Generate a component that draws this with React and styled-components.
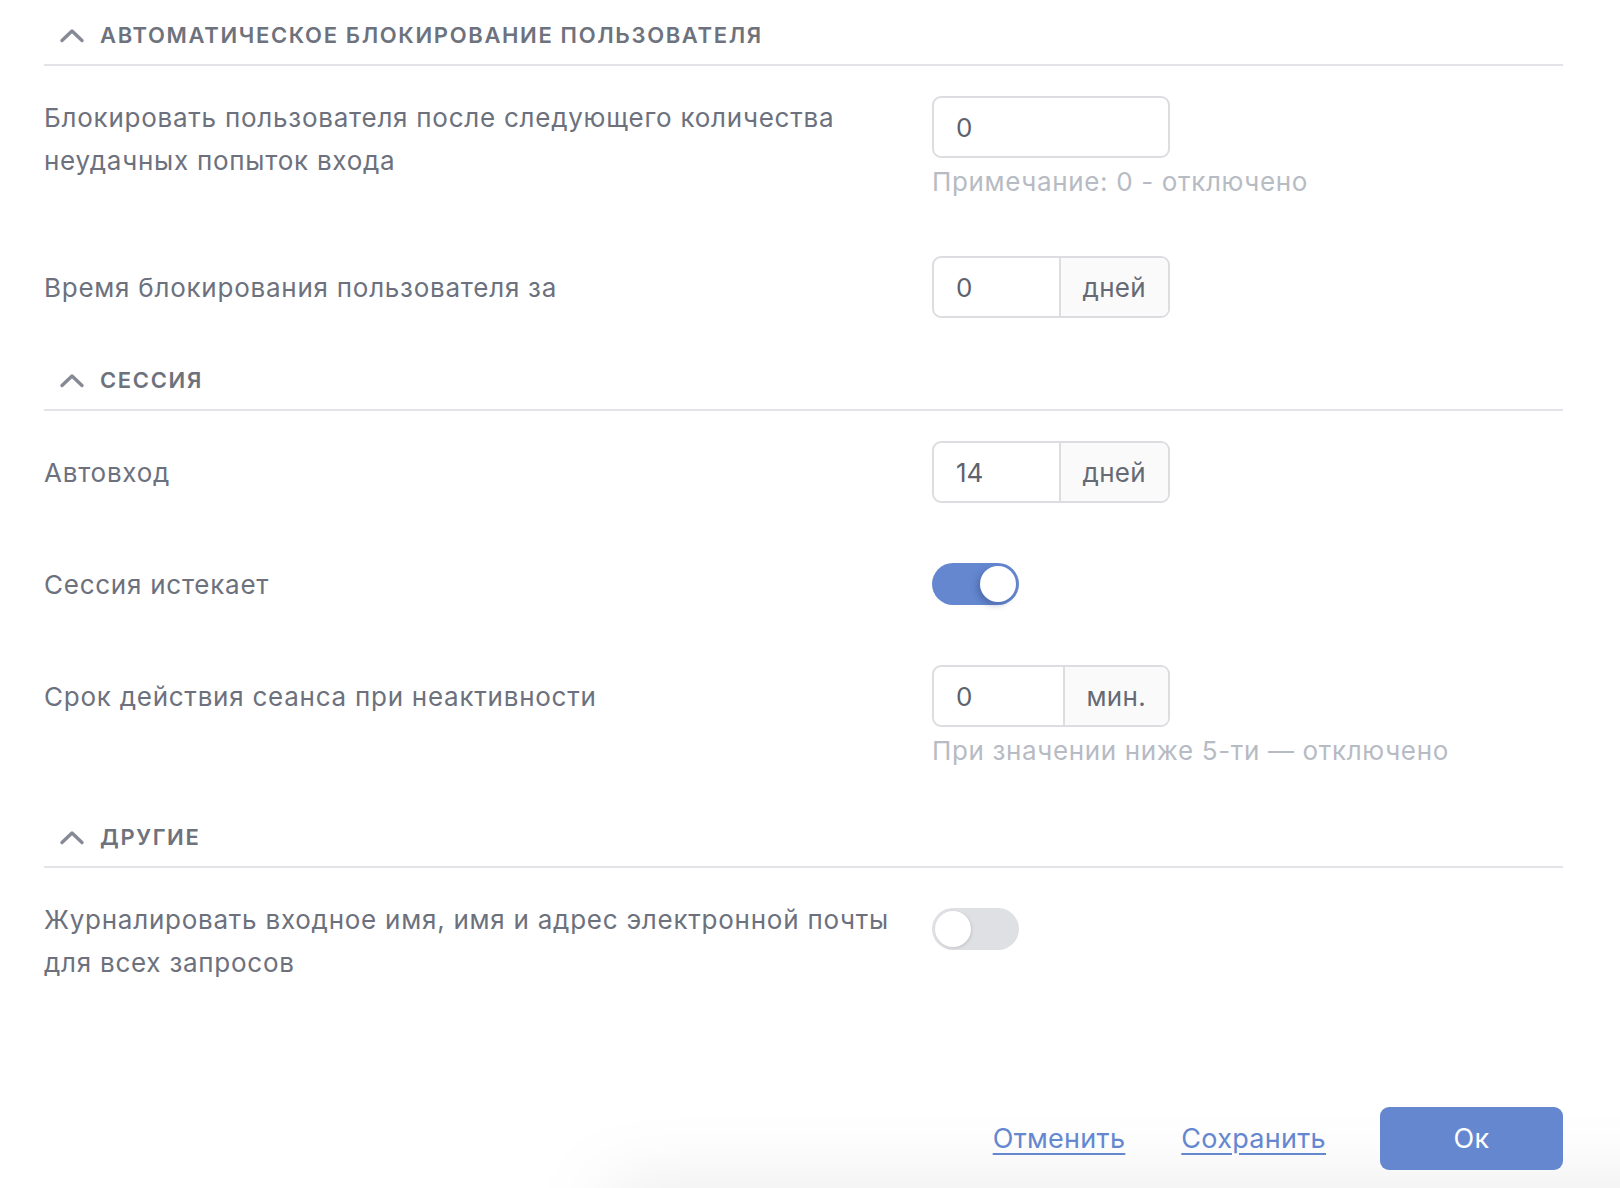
import React from "react";
import styled, { createGlobalStyle } from "styled-components";

const Global = createGlobalStyle`
  html, body { margin: 0; padding: 0; background: #ffffff; }
  body { font-family: Inter, "Noto Sans", "Liberation Sans", sans-serif; -webkit-font-smoothing: antialiased; }
  * { box-sizing: border-box; }
`;

const Page = styled.div`
  position: relative;
  height: 100vh;
  overflow: hidden;
  display: flex;
  flex-direction: column;
  padding: 0 57px 18px 44px;
  color: #6c717d;
`;

const Section = styled.section`
  padding-bottom: 27px;
`;

const Header = styled.div`
  display: flex;
  align-items: center;
  gap: 15px;
  padding: 19px 0 13px 15px;
  border-bottom: 2px solid #e3e4e8;
  line-height: 32px;
`;

const HeaderTitle = styled.span`
  font-size: 22px;
  font-weight: 600;
  letter-spacing: 1.65px;
  text-transform: uppercase;
  color: #6d727d;
`;

const Body = styled.div`
  display: flex;
  flex-direction: column;
  gap: 50px;
  padding-top: 30px;
`;

const Row = styled.div`
  display: grid;
  grid-template-columns: 888px 1fr;
  align-items: start;
`;

const Label = styled.div`
  min-height: 62px;
  display: flex;
  align-items: center;
  padding-right: 14px;
  font-size: 26px;
  line-height: 43px;
  letter-spacing: 0.75px;
  color: #6c717d;
`;

const Control = styled.div`
  display: flex;
  flex-direction: column;
  align-items: flex-start;
`;

const ControlLine = styled.div`
  height: 62px;
  display: flex;
  align-items: center;
`;

const InputBox = styled.div`
  width: 238px;
  height: 62px;
  display: flex;
  border: 2px solid #dcdde0;
  border-radius: 9px;
  overflow: hidden;
  background: #ffffff;
`;

const Value = styled.div`
  flex: 1;
  display: flex;
  align-items: center;
  padding-left: 22px;
  font-size: 26px;
  color: #5d626d;
`;

const Addon = styled.div`
  display: flex;
  align-items: center;
  padding: 0 22px;
  border-left: 2px solid #dcdde0;
  background: #fafafa;
  font-size: 26px;
  letter-spacing: 0.3px;
  color: #656a75;
`;

const Hint = styled.div`
  margin: 1px 0 2px;
  font-size: 26px;
  line-height: 45px;
  letter-spacing: 0.65px;
  color: #b7bbc3;
`;

const Track = styled.div`
  position: relative;
  width: 87px;
  height: 42px;
  border-radius: 21px;
  background: ${(p) => (p.$on ? "#6487d0" : "#dfe0e3")};
`;

const Knob = styled.div`
  position: absolute;
  top: 3px;
  left: ${(p) => (p.$on ? "48px" : "3px")};
  width: 36px;
  height: 36px;
  border-radius: 50%;
  background: #ffffff;
  box-shadow: ${(p) =>
    p.$on ? "-3px 3px 6px rgba(40, 60, 110, 0.35)" : "1px 1px 3px rgba(0, 0, 0, 0.12)"};
`;

const Footer = styled.div`
  position: relative;
  margin-top: auto;
  display: flex;
  align-items: center;
  justify-content: flex-end;
  gap: 56px;
  &::before {
    content: "";
    position: absolute;
    left: 560px;
    right: -200px;
    bottom: -70px;
    height: 50px;
    border-radius: 40px;
    background: rgba(0, 0, 0, 0.1);
    filter: blur(38px);
    z-index: 0;
    pointer-events: none;
  }
`;

const LinkButton = styled.a`
  position: relative;
  z-index: 1;
  font-size: 27px;
  letter-spacing: 0.3px;
  color: #6487d0;
  text-decoration: underline;
  text-underline-offset: 5px;
  text-decoration-thickness: 2px;
  cursor: pointer;
`;

const OkButton = styled.button`
  position: relative;
  z-index: 1;
  margin-left: -2px;
  width: 183px;
  height: 63px;
  border: none;
  border-radius: 9px;
  background: #6487d0;
  color: #ffffff;
  font-family: inherit;
  font-size: 27px;
  letter-spacing: 0.3px;
  cursor: pointer;
`;

const Chevron = () => (
  <svg width="26" height="16" viewBox="0 0 26 16" fill="none">
    <path d="M3 13.5 L13 4 L23 13.5" stroke="#858a94" strokeWidth="3.4" strokeLinecap="round" strokeLinejoin="round" />
  </svg>
);

const Toggle = ({ on }) => (
  <Track $on={on}>
    <Knob $on={on} />
  </Track>
);

const Field = ({ value, unit }) => (
  <InputBox>
    <Value>{value}</Value>
    {unit && <Addon>{unit}</Addon>}
  </InputBox>
);

const SectionBlock = ({ title, children }) => (
  <Section>
    <Header>
      <Chevron />
      <HeaderTitle>{title}</HeaderTitle>
    </Header>
    <Body>{children}</Body>
  </Section>
);

export default function App() {
  return (
    <>
      <Global />
      <Page>
        <SectionBlock title="Автоматическое блокирование пользователя">
          <Row>
            <Label>Блокировать пользователя после следующего количества неудачных попыток входа</Label>
            <Control>
              <Field value="0" />
              <Hint>Примечание: 0 - отключено</Hint>
            </Control>
          </Row>
          <Row>
            <Label>Время блокирования пользователя за</Label>
            <Control>
              <Field value="0" unit="дней" />
            </Control>
          </Row>
        </SectionBlock>

        <SectionBlock title="Сессия">
          <Row>
            <Label>Автовход</Label>
            <Control>
              <Field value="14" unit="дней" />
            </Control>
          </Row>
          <Row>
            <Label>Сессия истекает</Label>
            <Control>
              <ControlLine>
                <Toggle on />
              </ControlLine>
            </Control>
          </Row>
          <Row>
            <Label>Срок действия сеанса при неактивности</Label>
            <Control>
              <Field value="0" unit="мин." />
              <Hint>При значении ниже 5-ти — отключено</Hint>
            </Control>
          </Row>
        </SectionBlock>

        <SectionBlock title="Другие">
          <Row>
            <Label>Журналировать входное имя, имя и адрес электронной почты для всех запросов</Label>
            <Control>
              <ControlLine>
                <Toggle on={false} />
              </ControlLine>
            </Control>
          </Row>
        </SectionBlock>

        <Footer>
          <LinkButton>Отменить</LinkButton>
          <LinkButton>Сохранить</LinkButton>
          <OkButton>Ок</OkButton>
        </Footer>
      </Page>
    </>
  );
}
